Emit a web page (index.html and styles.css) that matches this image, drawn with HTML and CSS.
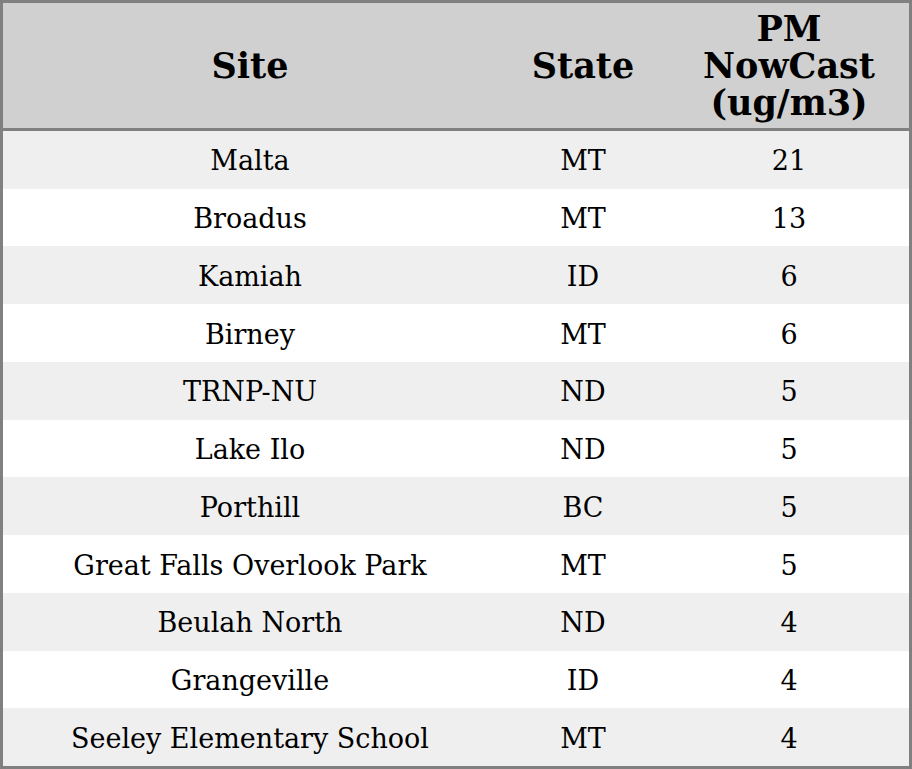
FILE: index.html
```html
<!DOCTYPE html>
<html>
<head>
<meta charset="utf-8">
<link rel="stylesheet" href="styles.css">
</head>
<body>
<div class="tbl">
  <div class="row head">
    <div class="c site">Site</div>
    <div class="c state">State</div>
    <div class="c pm">PM<br>NowCast<br>(ug/m3)</div>
  </div>
  <div class="row odd"><div class="c site">Malta</div><div class="c state">MT</div><div class="c pm">21</div></div>
  <div class="row"><div class="c site">Broadus</div><div class="c state">MT</div><div class="c pm">13</div></div>
  <div class="row odd"><div class="c site">Kamiah</div><div class="c state">ID</div><div class="c pm">6</div></div>
  <div class="row"><div class="c site">Birney</div><div class="c state">MT</div><div class="c pm">6</div></div>
  <div class="row odd"><div class="c site">TRNP-NU</div><div class="c state">ND</div><div class="c pm">5</div></div>
  <div class="row"><div class="c site">Lake Ilo</div><div class="c state">ND</div><div class="c pm">5</div></div>
  <div class="row odd"><div class="c site">Porthill</div><div class="c state">BC</div><div class="c pm">5</div></div>
  <div class="row"><div class="c site">Great Falls Overlook Park</div><div class="c state">MT</div><div class="c pm">5</div></div>
  <div class="row odd"><div class="c site">Beulah North</div><div class="c state">ND</div><div class="c pm">4</div></div>
  <div class="row"><div class="c site">Grangeville</div><div class="c state">ID</div><div class="c pm">4</div></div>
  <div class="row odd"><div class="c site">Seeley Elementary School</div><div class="c state">MT</div><div class="c pm">4</div></div>
</div>
</body>
</html>
```
FILE: styles.css
```css
html, body {
  margin: 0;
  padding: 0;
  background: #ffffff;
}
body {
  font-family: "DejaVu Serif", serif;
  color: #000;
}
.tbl {
  box-sizing: border-box;
  width: 912px;
  height: 769px;
  border: 3px solid #808080;
  display: flex;
  flex-direction: column;
}
.row {
  display: grid;
  grid-template-columns: 494px 172px 240px;
  flex: 1 1 0;
  align-items: center;
  font-size: 27px;
  box-sizing: border-box;
  padding-top: 2px;
}
.row.head {
  flex: 0 0 128px;
  padding-top: 0;
  border-bottom: 3px solid #808080;
  background: #d0d0d0;
  font-weight: bold;
  font-size: 35px;
  line-height: 37px;
}
.row.odd {
  background: #efefef;
}
.c {
  text-align: center;
}
```
